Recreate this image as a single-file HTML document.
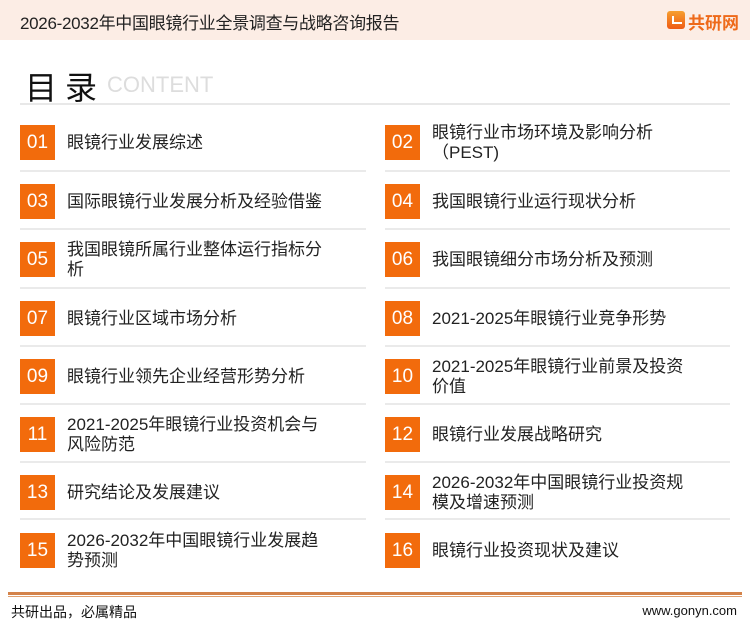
<!DOCTYPE html>
<html><head><meta charset="utf-8"><style>
*{margin:0;padding:0;box-sizing:border-box}
body{width:750px;height:622px;position:relative;background:#fff;font-family:"Liberation Sans","Noto Sans CJK SC",sans-serif;color:#222;overflow:hidden}
.hd{position:absolute;left:0;top:0;width:750px;height:40px;background:#fcede5}
.hd .t{position:absolute;left:20px;top:9px;font-size:17px;color:#222;letter-spacing:-0.3px}
.logo{position:absolute;left:667px;top:11px;width:18px;height:18px;border-radius:3px;background:linear-gradient(#f6a030,#ef5a14)}
.logo:after{content:"";position:absolute;left:5px;top:5px;width:8px;height:6px;border:2px solid #fff;border-top:none;border-right:none}
.lt{position:absolute;left:688px;top:9px;font-size:17px;font-weight:bold;color:#ee6a1a}
.mt{position:absolute;left:25px;top:63px;font-size:32px;color:#111;letter-spacing:8px}
.ct{position:absolute;left:107px;top:72px;font-size:22px;color:#ddd}
.ln{position:absolute;left:20px;top:103px;width:710px;height:2px;background:#e8e8e8}
.box{position:absolute;width:35px;height:35px;background:#f26b0c;color:#fff;font-size:19px;text-align:center;line-height:35px}
.tx{position:absolute;font-size:17px;line-height:20px;color:#222;display:flex;align-items:center;height:38px}
.sep{position:absolute;height:2px;background:#eaeaea}
.fl{position:absolute;left:8px;top:592px;width:734px;height:3px;background:#d4834a}
.fl2{position:absolute;left:8px;top:596px;width:734px;height:1px;background:#e0a070}
.ft{position:absolute;left:11px;top:602px;font-size:14px;color:#111}
.fr{position:absolute;right:13px;top:603px;font-size:13px;color:#111}
</style></head><body>
<div class="hd"><div class="t">2026-2032年中国眼镜行业全景调查与战略咨询报告</div><div class="logo"></div><div class="lt">共研网</div></div>
<div class="mt">目录</div><div class="ct">CONTENT</div>
<div class="ln"></div>

<div class="box" style="left:20px;top:125px">01</div><div class="tx" style="left:67px;top:124px">眼镜行业发展综述</div>
<div class="box" style="left:385px;top:125px">02</div><div class="tx" style="left:432px;top:124px">眼镜行业市场环境及影响分析<br>（PEST)</div>
<div class="sep" style="left:20px;top:170px;width:346px"></div><div class="sep" style="left:385px;top:170px;width:345px"></div>

<div class="box" style="left:20px;top:184px">03</div><div class="tx" style="left:67px;top:183px">国际眼镜行业发展分析及经验借鉴</div>
<div class="box" style="left:385px;top:184px">04</div><div class="tx" style="left:432px;top:183px">我国眼镜行业运行现状分析</div>
<div class="sep" style="left:20px;top:228px;width:346px"></div><div class="sep" style="left:385px;top:228px;width:345px"></div>

<div class="box" style="left:20px;top:242px">05</div><div class="tx" style="left:67px;top:241px">我国眼镜所属行业整体运行指标分<br>析</div>
<div class="box" style="left:385px;top:242px">06</div><div class="tx" style="left:432px;top:241px">我国眼镜细分市场分析及预测</div>
<div class="sep" style="left:20px;top:287px;width:346px"></div><div class="sep" style="left:385px;top:287px;width:345px"></div>

<div class="box" style="left:20px;top:301px">07</div><div class="tx" style="left:67px;top:300px">眼镜行业区域市场分析</div>
<div class="box" style="left:385px;top:301px">08</div><div class="tx" style="left:432px;top:300px">2021-2025年眼镜行业竞争形势</div>
<div class="sep" style="left:20px;top:345px;width:346px"></div><div class="sep" style="left:385px;top:345px;width:345px"></div>

<div class="box" style="left:20px;top:359px">09</div><div class="tx" style="left:67px;top:358px">眼镜行业领先企业经营形势分析</div>
<div class="box" style="left:385px;top:359px">10</div><div class="tx" style="left:432px;top:358px">2021-2025年眼镜行业前景及投资<br>价值</div>
<div class="sep" style="left:20px;top:403px;width:346px"></div><div class="sep" style="left:385px;top:403px;width:345px"></div>

<div class="box" style="left:20px;top:417px">11</div><div class="tx" style="left:67px;top:416px">2021-2025年眼镜行业投资机会与<br>风险防范</div>
<div class="box" style="left:385px;top:417px">12</div><div class="tx" style="left:432px;top:416px">眼镜行业发展战略研究</div>
<div class="sep" style="left:20px;top:461px;width:346px"></div><div class="sep" style="left:385px;top:461px;width:345px"></div>

<div class="box" style="left:20px;top:475px">13</div><div class="tx" style="left:67px;top:474px">研究结论及发展建议</div>
<div class="box" style="left:385px;top:475px">14</div><div class="tx" style="left:432px;top:474px">2026-2032年中国眼镜行业投资规<br>模及增速预测</div>
<div class="sep" style="left:20px;top:518px;width:346px"></div><div class="sep" style="left:385px;top:518px;width:345px"></div>

<div class="box" style="left:20px;top:533px">15</div><div class="tx" style="left:67px;top:532px">2026-2032年中国眼镜行业发展趋<br>势预测</div>
<div class="box" style="left:385px;top:533px">16</div><div class="tx" style="left:432px;top:532px">眼镜行业投资现状及建议</div>

<div class="fl"></div><div class="fl2"></div>
<div class="ft">共研出品，必属精品</div><div class="fr">www.gonyn.com</div>
</body></html>
